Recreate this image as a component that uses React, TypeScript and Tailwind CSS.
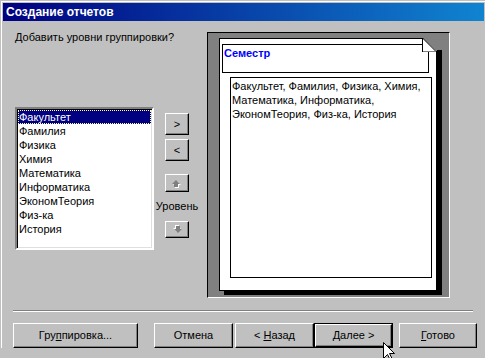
import React from 'react';

const fields = [
  'Факультет',
  'Фамилия',
  'Физика',
  'Химия',
  'Математика',
  'Информатика',
  'ЭкономТеория',
  'Физ-ка',
  'История',
];

const raised =
  'border border-t-white border-l-white border-r-black border-b-black shadow-[inset_-1px_-1px_#808080] bg-[#c0c0c0]';

const Btn: React.FC<{ className?: string; children: React.ReactNode }> = ({ className = '', children }) => (
  <div className={`${raised} flex items-center justify-center leading-[13px] ${className}`}>
    <span className="whitespace-pre">{children}</span>
  </div>
);

const LevelArrow: React.FC<{ down?: boolean }> = ({ down }) => (
  <svg width="10" height="9" viewBox="0 0 10 9" className={down ? 'block rotate-180' : 'block'}>
    <polygon points="5,2 9,6 7,6 7,9 3,9 3,6 1,6" fill="#ffffff" />
    <polygon points="4,1 8,5 6,5 6,8 2,8 2,5 0,5" fill="#808080" />
  </svg>
);

export default function App() {
  return (
    <div className="relative w-[485px] h-[358px] overflow-hidden bg-[#c0c0c0] text-[11px] text-black font-['Liberation_Sans',Arial,sans-serif]">
      <div className="ml-px mt-px border-l border-t border-white pl-px pt-px">
        {/* title bar */}
        <div className="w-[481px] h-[18px] flex items-center pl-[3px] bg-linear-to-r/srgb from-[#000080] to-[#1084d0] text-white font-bold text-[12px]">
          Создание отчетов
        </div>

        <div className="flex">
          {/* left side */}
          <div className="w-[197px] pl-[12px]">
            <div className="mt-[10px] leading-[13px]">Добавить уровни группировки?</div>
            <div className="mt-[63px] flex">
              <div className="w-[139px] h-[143px] bg-white border-2 border-t-[#808080] border-l-[#808080] border-r-white border-b-white shadow-[inset_1px_1px_#000,inset_-1px_-1px_#dfdfdf] p-px">
                {fields.map((f, i) => (
                  <div
                    key={f}
                    className={
                      i === 0
                        ? 'h-[14px] leading-[12px] bg-[#000080] text-white border border-dotted border-[#ffffc0]'
                        : 'h-[14px] leading-[14px] pl-px'
                    }
                  >
                    {f}
                  </div>
                ))}
              </div>
              <div className="w-[46px] flex flex-col items-center pt-[6px]">
                <Btn className="w-[24px] h-[22px]">&gt;</Btn>
                <Btn className="w-[24px] h-[22px] mt-[4px]">&lt;</Btn>
                <Btn className="w-[24px] h-[18px] mt-[13px]">
                  <LevelArrow />
                </Btn>
                <div className="mt-[8px] leading-[13px]">Уровень</div>
                <Btn className="w-[24px] h-[17px] mt-[8px]">
                  <LevelArrow down />
                </Btn>
              </div>
            </div>
          </div>

          {/* preview */}
          <div className="ml-[7px] mt-[11px] w-[243px] h-[266px] bg-[#808080] border border-t-black border-l-black border-r-white border-b-white">
            <div className="relative ml-[11px] mt-[5px] w-[218px] h-[253px] bg-white border border-black shadow-[5px_4px_0_#000]">
              <svg width="20" height="15" viewBox="0 0 20 15" className="absolute -top-px -right-[6px]">
                <polygon points="0.5,0 20,0 20,12 15,12 15,14" fill="#808080" />
                <polygon points="1,0.5 1,13.5 14.5,13.5" fill="#ffffff" />
                <line x1="0.5" y1="0" x2="0.5" y2="14" stroke="#000" />
                <line x1="0.5" y1="0" x2="15" y2="14.5" stroke="#000" />
                <line x1="1" y1="13.5" x2="14" y2="13.5" stroke="#808080" />
                <line x1="14.5" y1="13" x2="14.5" y2="15" stroke="#000" />
              </svg>
              <div className="ml-[2px] mt-[5px] w-[207px] h-[29px] border border-black pl-px pt-[2px] leading-[13px] font-bold text-[#0000ff]">
                Семестр
              </div>
              <div className="ml-[10px] mt-[4px] w-[202px] h-[201px] border border-black pl-px pt-px leading-[14px]">
                <div>Факультет, Фамилия, Физика, Химия,</div>
                <div>Математика, Информатика,</div>
                <div>ЭкономТеория, Физ-ка, История</div>
              </div>
            </div>
          </div>
        </div>

        {/* separator */}
        <div className="ml-[10px] mt-[12px] w-[460px] h-[2px] border-t border-b border-t-[#808080] border-b-white" />

        {/* buttons */}
        <div className="ml-[10px] mt-[11px] flex h-[25px]">
          <Btn className="w-[125px]">
            Гру<span className="underline">п</span>пировка...
          </Btn>
          <Btn className="w-[79px] ml-[16px]">Отмена</Btn>
          <Btn className="w-[79px] ml-[2px]">
            {'< '}
            <span className="underline">Н</span>азад
          </Btn>
          <div className="w-[79px] border border-black flex">
            <div className="flex-1 flex items-center justify-center leading-[13px] border border-t-white border-l-white border-r-black border-b-black shadow-[inset_-1px_-1px_#808080]">
              <span className="whitespace-pre">
                <span className="underline">Д</span>
                {'алее >'}
              </span>
            </div>
          </div>
          <Btn className="w-[78px] ml-[6px]">
            <span className="underline">Г</span>отово
          </Btn>
        </div>
      </div>

      {/* mouse pointer */}
      <svg width="13" height="20" viewBox="0 0 13 20" className="absolute left-[383px] top-[342px]">
        <path d="M0.5 0.5 L0.5 16.5 L4.5 12.5 L7.5 18.5 L9.5 17.5 L6.5 11.5 L11.5 11.5 Z" fill="#fff" stroke="#000" />
      </svg>
    </div>
  );
}
